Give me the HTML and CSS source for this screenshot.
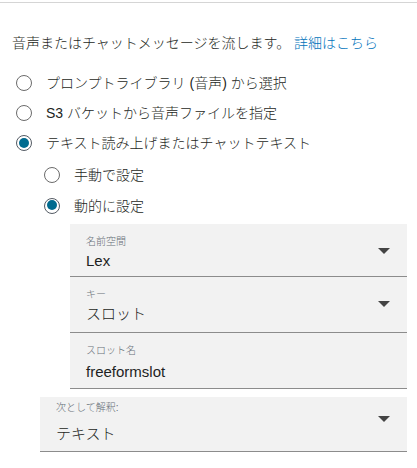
FILE: index.html
```html
<!DOCTYPE html>
<html lang="ja">
<head>
<meta charset="utf-8">
<link rel="stylesheet" href="styles.css">
</head>
<body>
<div class="rule"></div>
<p class="intro">音声またはチャットメッセージを流します。 <a class="link" href="#">詳細はこちら</a></p>
<div class="options">
  <div class="row"><span class="radio"></span><span class="label">プロンプトライブラリ <span class="lat">(</span>音声<span class="lat">)</span> から選択</span></div>
  <div class="row"><span class="radio"></span><span class="label"><span class="lat">S3</span> バケットから音声ファイルを指定</span></div>
  <div class="row"><span class="radio checked"></span><span class="label">テキスト読み上げまたはチャットテキスト</span></div>
  <div class="sub">
    <div class="row row-sub"><span class="radio"></span><span class="label">手動で設定</span></div>
    <div class="row row-sub"><span class="radio checked"></span><span class="label">動的に設定</span></div>
    <div class="fields">
      <div class="field field-first">
        <div class="ftext"><div class="flabel">名前空間</div><div class="fvalue lat">Lex</div></div>
        <span class="arrow"></span>
      </div>
      <div class="field">
        <div class="ftext"><div class="flabel">キー</div><div class="fvalue">スロット</div></div>
        <span class="arrow"></span>
      </div>
      <div class="field">
        <div class="ftext"><div class="flabel">スロット名</div><div class="fvalue fvalue-low lat">freeformslot</div></div>
      </div>
    </div>
  </div>
</div>
<div class="field field-interp">
  <div class="ftext"><div class="flabel">次として解釈<span class="lat">:</span></div><div class="fvalue">テキスト</div></div>
  <span class="arrow arrow-up"></span>
</div>
</body>
</html>
```
FILE: styles.css
```css
html, body {
  margin: 0;
  padding: 0;
  background: #ffffff;
}
body {
  width: 417px;
  height: 468px;
  overflow: hidden;
  font-family: "Liberation Sans", "Noto Sans CJK JP", sans-serif;
  font-weight: 300;
  color: #1d1f23;
  font-size: 14px;
}
.lat {
  font-weight: 400;
}
.rule {
  margin-top: 2px;
  border-top: 1px solid #d5d5d5;
}
.intro {
  margin: 30px 0 0 12px;
  line-height: 20px;
  height: 20px;
  font-size: 14px;
}
.link {
  color: #0073bb;
  text-decoration: none;
}
.options {
  margin-top: 15px;
  padding-left: 16px;
  padding-right: 10px;
}
.row {
  display: flex;
  align-items: center;
  height: 30px;
}
.row-sub {
  height: 31px;
}
.sub {
  padding-left: 28px;
  margin-top: 1px;
}
.radio {
  box-sizing: border-box;
  width: 16px;
  height: 16px;
  border-radius: 50%;
  border: 1px solid #6b6b6b;
  background: #fff;
  flex: none;
  position: relative;
}
.radio.checked {
  border: 1.5px solid #545b64;
}
.radio.checked::after {
  content: "";
  position: absolute;
  left: 1.5px;
  top: 1.5px;
  width: 10px;
  height: 10px;
  border-radius: 50%;
  background: #006b8f;
}
.label {
  margin-left: 14px;
  font-size: 14px;
  line-height: 20px;
  white-space: nowrap;
}
.fields {
  margin-top: 3px;
  margin-left: 26px;
}
.field {
  display: flex;
  align-items: flex-start;
  background: #f2f2f2;
  border-bottom: 1px solid #8c8c8c;
  box-sizing: border-box;
  height: 56px;
  padding: 11px 17px 0 16px;
}
.field-first {
  height: 53px;
  padding-top: 10.5px;
}
.ftext {
  flex: 1;
  display: flex;
  flex-direction: column;
}
.flabel {
  font-size: 10px;
  line-height: 14px;
  color: #687078;
}
.fvalue {
  font-size: 15px;
  line-height: 20px;
  margin-top: 2px;
}
.fvalue-low {
  margin-top: 4px;
}
.arrow {
  width: 0;
  height: 0;
  border-left: 6px solid transparent;
  border-right: 6px solid transparent;
  border-top: 6px solid #444;
  flex: none;
  margin-top: 13px;
}
.field-interp {
  margin: 8px 10px 0 40px;
  height: 55px;
  padding-top: 3.5px;
}
.field-interp .fvalue {
  margin-top: 9.5px;
}
.arrow-up {
  margin-top: 15px;
}
```
